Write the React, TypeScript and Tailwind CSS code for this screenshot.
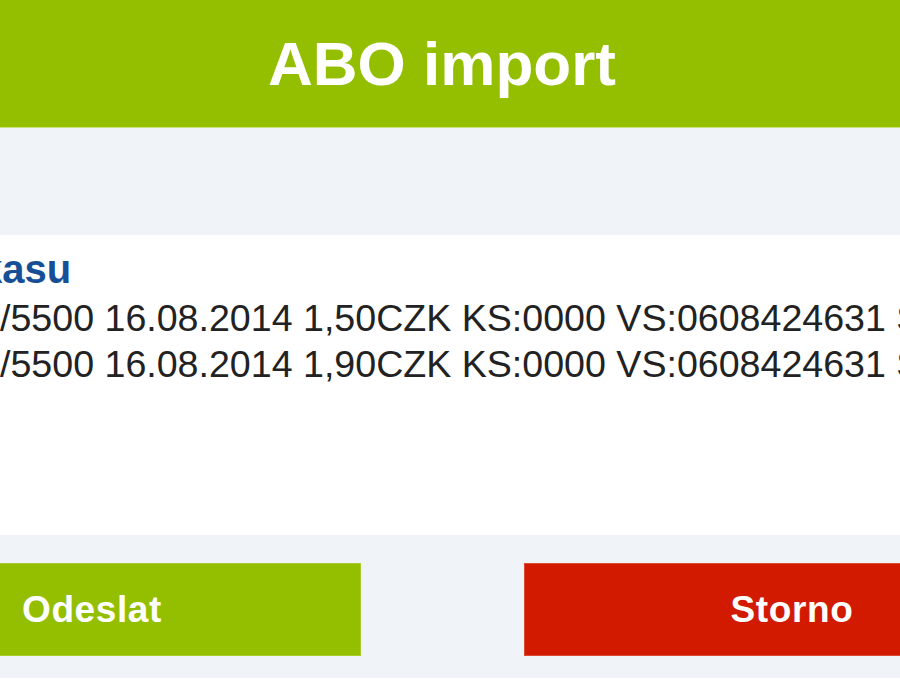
import React from 'react';

const rows = [
  '/5500 16.08.2014 1,50CZK KS:0000 VS:0608424631 SS:0000000000',
  '/5500 16.08.2014 1,90CZK KS:0000 VS:0608424631 SS:0000000000',
];

const App = () => {
  return (
    <div className="w-[900px] h-[700px] overflow-hidden bg-white font-['Liberation_Sans',Arial,sans-serif]">
      <div className="w-[1238px] ml-[-177px]">
        {/* header */}
        <div className="h-[128px] bg-[#94be00] border-b border-[#c9e07c] flex items-center justify-center">
          <h1 className="text-[62px] leading-[62px] font-bold text-white">ABO import</h1>
        </div>

        <div className="h-[107px] bg-[#f0f4f9]" />

        {/* body */}
        <div className="h-[300px] bg-white pl-[177px] pt-[11px] text-[#222222] whitespace-nowrap">
          <div className="ml-[-20px] text-[40px] leading-[46px] font-bold text-[#174f97]">kasu</div>
          <div className="mt-[3px]">
            {rows.map((row, i) => (
              <div key={i} className="text-[37.6px] leading-[46px]">
                {row}
              </div>
            ))}
          </div>
        </div>

        {/* buttons */}
        <div className="h-[143px] bg-[#f0f4f9] pt-[28px] flex justify-center gap-[163px]">
          <button className="w-[537px] h-[93px] bg-[#94be00] border border-[#a8cc2a] text-white text-[37px] font-bold tracking-[0.6px]">
            Odeslat
          </button>
          <button className="w-[537px] h-[93px] bg-[#d21a00] border border-[#dc4a33] text-white text-[37px] font-bold tracking-[0.6px]">
            Storno
          </button>
        </div>
      </div>
    </div>
  );
};

export default App;
